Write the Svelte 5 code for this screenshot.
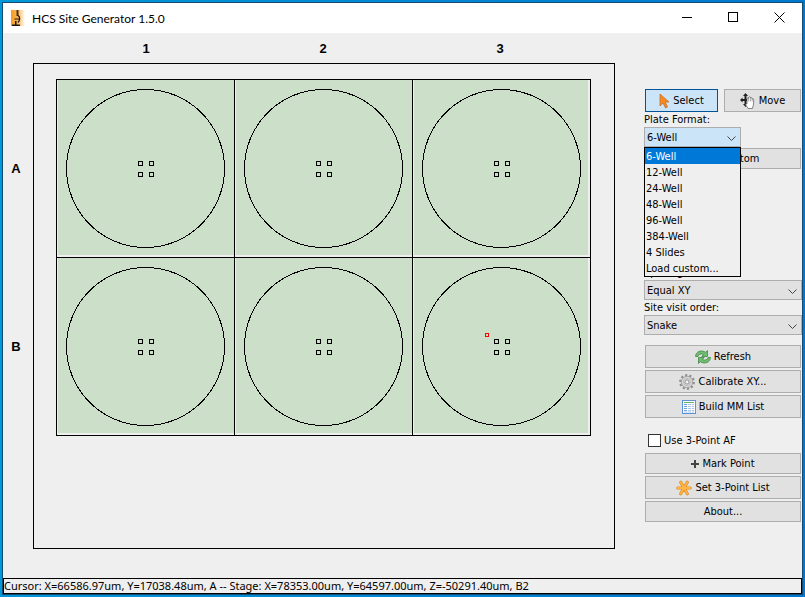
<script>
  const formats = ['6-Well', '12-Well', '24-Well', '48-Well', '96-Well', '384-Well', '4 Slides', 'Load custom...'];
  const rows = ['A', 'B'];
  const cols = ['1', '2', '3'];
  const pitch = 178;
  const sites = [[82, 82], [93, 82], [82, 93], [93, 93]];

  let tool = 'select';
  let format = '6-Well';
  let open = true;
  let spacing = 'Equal XY';
  let order = 'Snake';
  let useAf = false;

  function toggleList(event) {
    event.preventDefault();
    open = !open;
  }

  function pick(name) {
    format = name;
    open = false;
  }
</script>

<div class="desktop">
  <div class="window">
    <header>
      <svg class="logo" width="14" height="16" viewBox="0 0 14 16">
        <defs>
          <linearGradient id="glow">
            <stop offset="0" stop-color="#f79a1c" />
            <stop offset="0.5" stop-color="#fbb75a" />
            <stop offset="1" stop-color="#fff" />
          </linearGradient>
        </defs>
        <rect width="14" height="16" fill="url(#glow)" />
        <path d="M5.500 0h2v6h-2z" fill="#4a3018" />
        <path d="M7 5.500c2.500 1.500 2 5 0 7M3.500 9h4.500" fill="none" stroke="#1c1612" stroke-width="1.200" />
        <path d="M1 14.500h8V16H1zM4 11h1.500v4H4z" fill="#1c1612" />
      </svg>
      <h1>HCS Site Generator 1.5.0</h1>
      <button class="caption" aria-label="Minimize">
        <svg width="11" height="11" viewBox="0 0 11 11"><path d="M0 5.500h10" /></svg>
      </button>
      <button class="caption" aria-label="Maximize">
        <svg width="11" height="11" viewBox="0 0 11 11"><path d="M.5 .5h9v9h-9z" /></svg>
      </button>
      <button class="caption" aria-label="Close">
        <svg class="smooth" width="11" height="11" viewBox="0 0 11 11"><path d="M.5 .5l10 10M10.500 .5l-10 10" /></svg>
      </button>
    </header>

    <main>
      <svg class="plate" viewBox="0 0 612 545">
        {#each cols as col, c}
          <text x={143 + c * (pitch - 1)} y="20">{col}</text>
        {/each}
        {#each rows as row, r}
          <text x="13" y={140 + r * pitch}>{row}</text>
        {/each}
        <rect class="line" x="30.5" y="30.5" width="581" height="485" />
        {#each rows as row, r}
          {#each cols as col, c}
            <g transform="translate({53 + c * pitch} {46 + r * pitch})">
              <rect class="gap" width="178" height="178" />
              <rect class="well" x="2" y="1" width={c === cols.length - 1 ? 174 : 176} height="175" />
              <rect class="line" x="0.5" y="0.5" width="178" height="178" />
              <circle class="line" cx="89.5" cy="89.5" r="79" />
              {#each sites as [x, y]}
                <rect class="line" x={x + 0.5} y={y + 0.5} width="4" height="4" />
              {/each}
            </g>
          {/each}
        {/each}
        <rect class="stage" x="482.5" y="300.5" width="3" height="3" />
      </svg>

      <aside>
        <div class="tools">
          <button class="tall" class:active={tool === 'select'} on:click={() => (tool = 'select')}>
            <svg width="11" height="16" viewBox="0 0 11 16">
              <path d="M1 1v12l3-3 2.500 5 2-1-2.300-5H10z" fill="#f58a1f" stroke="#c96f2a" stroke-width="0.800" />
            </svg>
            Select
          </button>
          <button class="tall" class:active={tool === 'move'} on:click={() => (tool = 'move')}>
            <svg width="16" height="16" viewBox="0 0 16 16">
              <path d="M5.500 0L8 3H6.500v3H10V4.500L12.500 7 10 9.500V8H6.500v3H8l-2.500 3L3 11h1.500V8h-2v1.500L0 7l2.500-2.500V6h2V3H3z" fill="#222" />
              <path d="M8 15.500L5.500 11.500q.2-1.200 1.500-.4V5.500q.8-1 1.600 0V4.300q.9-1 1.800 0v.7q.9-.8 1.700 0v1q1.200-.5 1.500.3V11l-1.200 4.500z" fill="#fff" stroke="#555" stroke-width="0.700" />
              <path d="M8.600 5.500v3M10.400 5v3.500M12.100 6v2.500" stroke="#777" stroke-width="0.600" />
            </svg>
            Move
          </button>
        </div>

        <label for="format">Plate Format:</label>
        <div class="combo format">
          <select id="format" bind:value={format} on:mousedown={toggleList}>
            {#each formats as name}
              <option>{name}</option>
            {/each}
          </select>
          <svg width="9" height="6" viewBox="0 0 9 6"><path d="M.5 .5l4 4 4-4" /></svg>
          {#if open}
            <ul class="list">
              {#each formats as name}
                <li><button class:chosen={name === format} on:click={() => pick(name)}>{name}</button></li>
              {/each}
            </ul>
          {/if}
        </div>
        <button class="custom">Custom</button>

        <label for="spacing">Spacing:</label>
        <div class="combo">
          <select id="spacing" bind:value={spacing}>
            <option>Equal XY</option>
          </select>
          <svg width="9" height="6" viewBox="0 0 9 6"><path d="M.5 .5l4 4 4-4" /></svg>
        </div>
        <label for="order">Site visit order:</label>
        <div class="combo">
          <select id="order" bind:value={order}>
            <option>Snake</option>
          </select>
          <svg width="9" height="6" viewBox="0 0 9 6"><path d="M.5 .5l4 4 4-4" /></svg>
        </div>

        <div class="stack actions">
          <button class="tall">
            <svg width="16" height="16" viewBox="0 0 16 16">
              <path d="M.6 7.500C.5 2.500 6.500.5 10.700 3.300L12.500 1.500V7.500H6.800L8.700 5.500C6.300 4.300 3.300 5 3 7.500z" fill="#72bd74" stroke="#3d8a45" stroke-width="0.800" />
              <path d="M15.400 8.500c.1 5-5.900 7-10.100 4.200L3.500 14.500V8.500H9.200L7.300 10.500c2.400 1.200 5.400.5 5.700-2z" fill="#72bd74" stroke="#3d8a45" stroke-width="0.800" />
            </svg>
            Refresh
          </button>
          <button class="tall">
            <svg width="16" height="16" viewBox="0 0 16 16">
              <circle cx="8" cy="8" r="6.700" fill="none" stroke="#8f8f8f" stroke-width="2.400" stroke-dasharray="2.105 2.105" />
              <circle cx="8" cy="8" r="5.800" fill="#d2d2d2" stroke="#9a9a9a" stroke-width="0.800" />
              <circle cx="8" cy="8" r="3.600" fill="none" stroke="#bdbdbd" stroke-width="0.800" />
              <circle cx="8" cy="8" r="2" fill="#f2f2f2" stroke="#888" stroke-width="0.800" />
            </svg>
            Calibrate XY...
          </button>
          <button class="tall">
            <svg width="14" height="14" viewBox="0 0 14 14">
              <rect x="0.500" y="0.500" width="13" height="13" fill="#fff" stroke="#5b92d8" />
              <path d="M2 2.500h10" stroke="#6bb36b" />
              <path d="M2 4.500h10M2 6.500h10M2 8.500h10M2 10.500h10M2 12h10" stroke="#a9c6ea" />
              <path d="M5.500 4v8M9.500 4v8" stroke="#fff" stroke-width="0.800" />
              <path d="M2 4.500h3M2 6.500h3M2 8.500h3M2 10.500h3" stroke="#6f9fdc" />
            </svg>
            Build MM List
          </button>
        </div>

        <label class="check">
          <input type="checkbox" bind:checked={useAf} />
          Use 3-Point AF
        </label>

        <div class="stack">
          <button>
            <svg width="8" height="8" viewBox="0 0 8 8"><path d="M4 0v8M0 4h8" stroke="#444" stroke-width="2" /></svg>
            Mark Point
          </button>
          <button class="tall">
            <svg width="16" height="16" viewBox="0 0 16 16">
              <path d="M1.800 8h12.400M4.700 2.300l6.600 11.400M11.300 2.300L4.700 13.700" stroke="#dc8a28" stroke-width="3.200" stroke-linecap="round" />
              <path d="M1.800 8h12.400M4.700 2.300l6.600 11.400M11.300 2.300L4.700 13.700" stroke="#ffb541" stroke-width="1.900" stroke-linecap="round" />
            </svg>
            Set 3-Point List
          </button>
          <button>About...</button>
        </div>
      </aside>
    </main>

    <footer>Cursor: X=66586.97um, Y=17038.48um, A -- Stage: X=78353.00um, Y=64597.00um, Z=-50291.40um, B2</footer>
  </div>
</div>

<style>
  :global(body) {
    margin: 0;
  }
  .desktop {
    box-sizing: border-box;
    min-height: 100vh;
    padding: 2px;
    display: flex;
    background: linear-gradient(to right, #0098d8, #0078d0);
    font: 11px "DejaVu Sans Condensed", "Noto Sans", sans-serif;
    color: #000;
  }
  .window {
    flex: 1;
    min-width: 0;
    display: flex;
    flex-direction: column;
    border: 1px solid #174a70;
    background: #efefef;
  }
  header {
    display: flex;
    align-items: center;
    height: 30px;
    padding-left: 8px;
    background: #fff;
  }
  h1 {
    flex: 1;
    margin: 0 0 0 7px;
    font: 12px Lato, "Open Sans", sans-serif;
  }
  .caption {
    width: 46px;
    height: 29px;
    padding: 0;
    border: none;
    background: none;
  }
  .caption path {
    fill: none;
    stroke: #000;
    shape-rendering: crispEdges;
  }
  .caption .smooth path {
    shape-rendering: auto;
  }
  main {
    flex: 1;
    display: grid;
    grid-template-columns: minmax(0, 1fr) 187px;
    align-items: start;
  }
  .plate {
    display: block;
    width: 100%;
  }
  .plate text {
    font: bold 13px "Liberation Sans", Arial, sans-serif;
    text-anchor: middle;
  }
  .plate rect,
  .plate circle {
    shape-rendering: crispEdges;
  }
  .line {
    fill: none;
    stroke: #000;
  }
  .gap {
    fill: #efefef;
  }
  .well {
    fill: #ccdfc9;
  }
  .stage {
    fill: none;
    stroke: #f00;
  }
  aside {
    display: flex;
    flex-direction: column;
    padding: 56px 0 0 29px;
  }
  aside button {
    display: flex;
    align-items: center;
    justify-content: center;
    gap: 3px;
    height: 21px;
    padding: 0;
    border: 1px solid #adadad;
    background: #e1e1e1;
    font: inherit;
    color: inherit;
  }
  aside .tall {
    height: 23px;
  }
  aside .active {
    border-color: #005499;
    background: #cce4f7;
  }
  .tools {
    display: grid;
    grid-template-columns: 73px 1fr;
    gap: 6px;
    margin: 0 1px;
  }
  label {
    line-height: 15px;
  }
  .combo {
    position: relative;
    height: 20px;
  }
  .combo > svg {
    position: absolute;
    right: 5px;
    top: 9px;
    pointer-events: none;
  }
  .combo path {
    fill: none;
    stroke: #444;
  }
  select {
    appearance: none;
    width: 100%;
    height: 20px;
    padding: 0 2px;
    border: 1px solid #adadad;
    border-radius: 0;
    background: #e1e1e1;
    font: inherit;
    color: inherit;
  }
  .format {
    width: 97px;
  }
  .format select {
    background: #cce4f7;
  }
  .list {
    position: absolute;
    z-index: 1;
    top: 20px;
    left: 0;
    right: 0;
    margin: 0;
    padding: 0;
    border: 1px solid #000;
    background: #efefef;
    list-style: none;
  }
  .list button {
    width: 100%;
    height: 16px;
    padding: 0 1px;
    border: none;
    background: none;
    justify-content: flex-start;
  }
  .list .chosen {
    background: #0078d7;
    color: #fff;
  }
  .custom {
    margin: 1px 1px 96px 36px;
  }
  .stack {
    display: flex;
    flex-direction: column;
    gap: 2px;
    margin: 0 1px;
  }
  .actions {
    margin-top: 10px;
  }
  .check {
    display: flex;
    align-items: center;
    gap: 3px;
    margin: 15px 4px 5px;
  }
  .check input {
    appearance: none;
    box-sizing: border-box;
    width: 13px;
    height: 13px;
    margin: 0;
    border: 1px solid #333;
    background: #fff;
  }
  .check input:checked {
    background: #333;
    box-shadow: inset 0 0 0 2px #fff;
  }
  footer {
    box-sizing: border-box;
    height: 16px;
    border: 1px solid #000;
    font-family: "Noto Sans", sans-serif;
    line-height: 14px;
    white-space: nowrap;
    overflow: hidden;
  }
</style>
